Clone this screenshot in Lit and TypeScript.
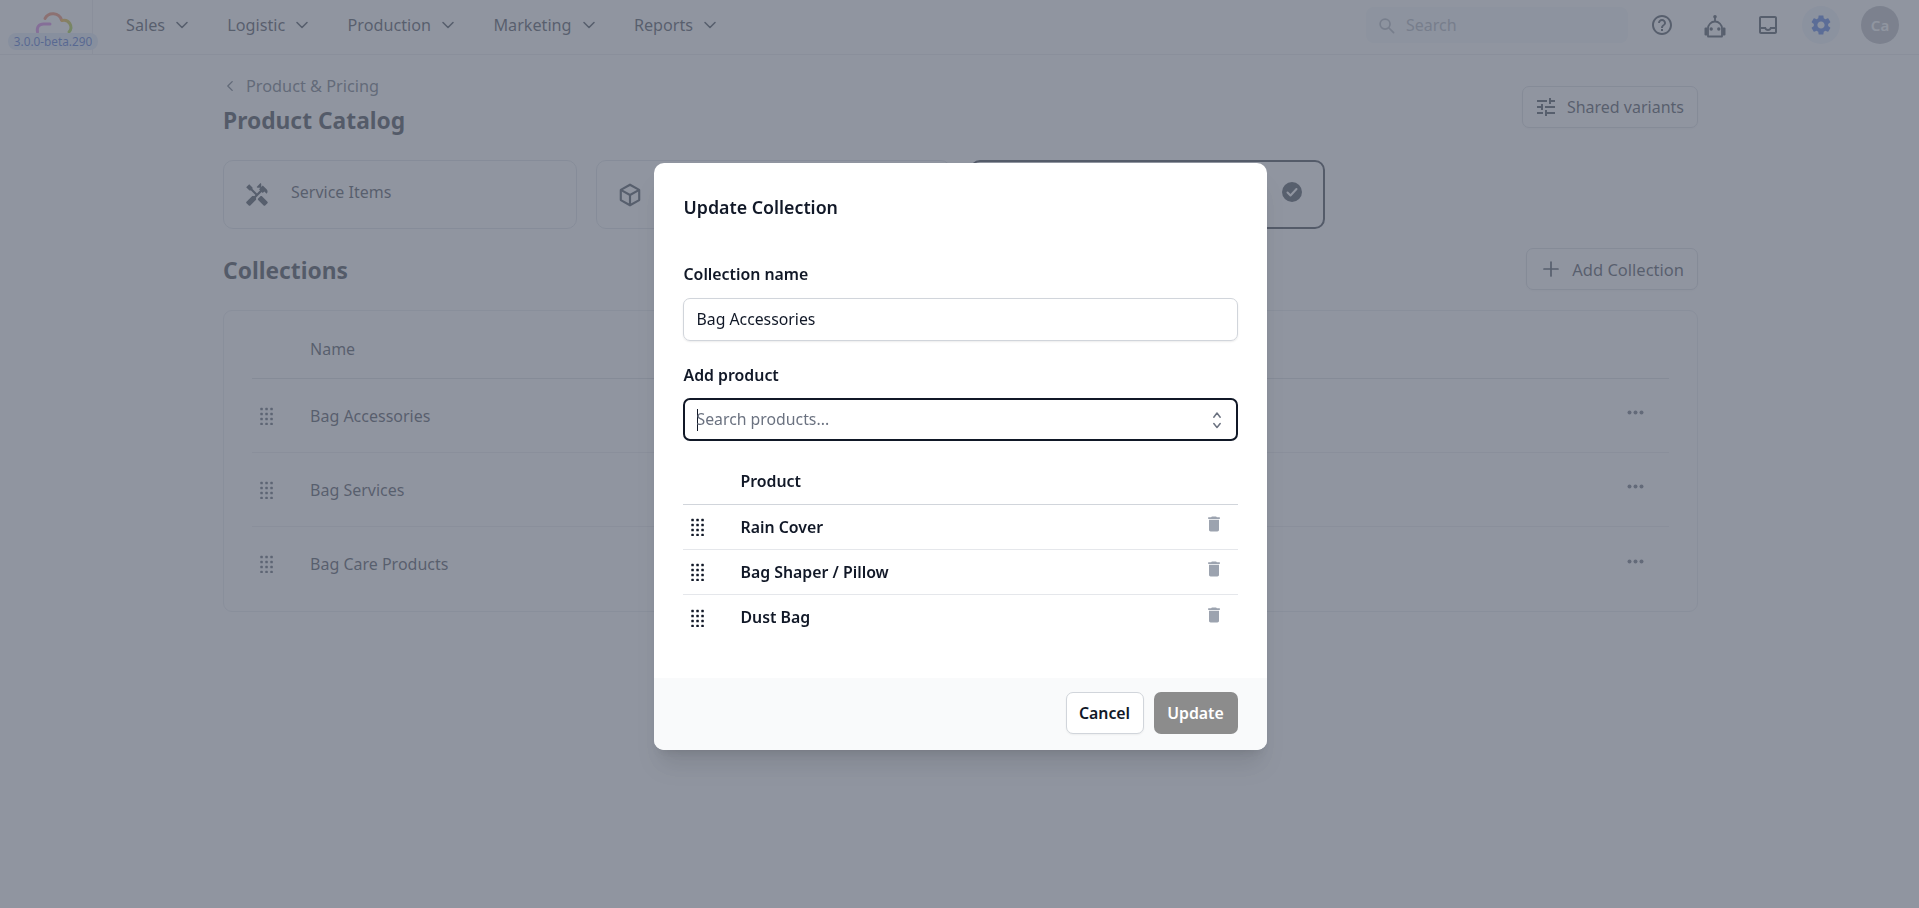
import { LitElement, html, css, svg } from "lit";
import { customElement } from "lit/decorators.js";

const chevron = html`<svg class="chev" viewBox="0 0 16 16" fill="none" stroke="currentColor" stroke-width="1.6" stroke-linecap="round" stroke-linejoin="round"><path d="M3 5.5l5 5 5-5"/></svg>`;
const dots = (cls: string) => html`<svg class=${cls} viewBox="0 0 13 18" fill="currentColor">${[0, 1, 2].map((c) => [0, 1, 2, 3].map((r) => svg`<rect x=${0.3 + c * 5} y=${0.8 + r * 5} width="2.5" height="2.5" rx="0.6"/>`))}</svg>`;
const ellipsis = html`<svg class="more" viewBox="0 0 17 5" fill="currentColor"><circle cx="2.5" cy="2.5" r="2"/><circle cx="8.5" cy="2.5" r="2"/><circle cx="14.5" cy="2.5" r="2"/></svg>`;
const trash = html`<svg class="trash" viewBox="0 0 24 24" fill="currentColor"><path d="M6 19c0 1.1.9 2 2 2h8c1.1 0 2-.9 2-2V7H6v12zM19 4h-3.5l-1-1h-5l-1 1H5v2h14V4z"/></svg>`;

@customElement("app-root")
export class AppRoot extends LitElement {
  static styles = css`
    :host { display: block; min-height: 908px; background: #fff; font-family: "Noto Sans", "Open Sans", sans-serif; color: #111827; font-size: 16px; }
    * { box-sizing: border-box; }
    svg { display: block; flex: none; }
    header { display: flex; align-items: center; height: 55px; border-bottom: 1px solid #e5e7eb; padding: 0 20px 4px 0; }
    .logo { position: relative; width: 93px; height: 54px; margin-bottom: -4px; border-right: 1px solid #e5e7eb; flex: none; }
    .logo svg { width: 92px; height: 54px; }
    .badge { position: absolute; left: 8px; top: 33px; width: 90px; height: 17px; border-radius: 8px; background: #dbe7f8; color: #1f4fc4; font-size: 11.8px; line-height: 16px; text-align: center; white-space: nowrap; }
    nav { display: flex; gap: 37.3px; margin-left: 33px; }
    .nav-item { display: flex; align-items: center; gap: 9px; color: #1f2937; font-size: 16.2px; }
    .chev { width: 16px; height: 16px; }
    .right { margin-left: auto; display: flex; align-items: center; gap: 15px; }
    .search { display: flex; align-items: center; gap: 11px; width: 262px; height: 36px; padding-left: 12px; background: #f1f5f9; border-radius: 8px; color: #9ca3af; font-size: 16px; }
    .search svg { width: 17px; height: 17px; }
    .icon-btn { width: 38px; height: 38px; border-radius: 50%; display: flex; align-items: center; justify-content: center; color: #1f2937; }
    .icon-btn svg { width: 24px; height: 24px; }
    .icon-btn svg.robot { height: 26px; }
    .icon-btn.active { background: #eaf1fb; color: #2f62d9; }
    .avatar { width: 38px; height: 38px; margin-left: 6px; border-radius: 50%; background: #aeb1b9; color: #fff; display: flex; align-items: center; justify-content: center; font-weight: 600; font-size: 15px; }
    main { margin-left: 223px; width: 1475px; padding-top: 19px; }
    .top { display: flex; justify-content: space-between; align-items: flex-start; }
    .crumb { display: flex; align-items: center; gap: 9px; height: 24px; color: #4b5563; font-size: 16.3px; }
    .crumb svg { width: 14px; height: 14px; }
    h1 { margin: 7px 0 0; font-size: 22.8px; line-height: 32px; font-weight: 700; color: #111827; }
    .btn { display: flex; align-items: center; height: 42px; border: 1px solid #d1d5db; border-radius: 7px; padding: 0 13px 0 11px; gap: 9px; color: #1f2937; font-size: 16px; box-shadow: 0 1px 2px rgba(0,0,0,.05); }
    .btn svg { width: 24px; height: 24px; }
    .btn.add { font-size: 16.5px; padding-left: 12px; }
    .top .btn { margin-top: 12px; }
    .cards { display: grid; grid-template-columns: 354px 354.5px 355.5px; gap: 19px; margin-top: 23px; }
    .card { height: 69px; border: 1px solid #d8dce3; border-radius: 10px; display: flex; align-items: center; padding: 0 20px; color: #1f2937; }
    .card.sel { border: 2px solid #111827; padding: 0 19px; }
    .card svg.ic { width: 26px; height: 26px; margin-right: 21px; }
    .card .label { flex: 1; margin-top: -5px; }
    .card svg.ok { width: 24px; height: 24px; margin: -5px 0 0 auto; }
    .section { display: flex; justify-content: space-between; align-items: center; margin-top: 19px; }
    h2 { margin: 0; padding-top: 2px; font-size: 22.8px; font-weight: 700; color: #111827; }
    .table { margin-top: 20px; border: 1px solid #e2e5ea; border-radius: 9px; padding: 0 28px 10px 28px; }
    .thead { height: 68px; border-bottom: 1px solid #d1d5db; display: flex; align-items: center; padding-left: 58px; padding-top: 8px; color: #1f2937; }
    .row { height: 74px; display: flex; align-items: center; border-bottom: 1px solid #e5e7eb; color: #1f2937; }
    .row:last-child { border-bottom: none; }
    .drag { width: 13px; height: 18px; margin-left: 8px; color: #374151; }
    .name { margin-left: 37px; flex: 1; }
    .more { width: 17px; height: 5px; margin: -6px 25px 0 0; color: #4b5563; }

    .overlay { position: fixed; inset: 0; background: rgba(107,114,128,.75); display: flex; justify-content: center; align-items: flex-start; padding-top: 163px; }
    .modal { width: 613px; height: 587px; background: #fff; border-radius: 10px; box-shadow: 0 20px 25px -5px rgba(0,0,0,.1), 0 8px 10px -6px rgba(0,0,0,.1); overflow: hidden; display: flex; flex-direction: column; margin-left: 1px; }
    .body { padding: 32px 29px 0; flex: 1; }
    .title { font-size: 17.8px; font-weight: 560; line-height: 24px; padding-left: 1px; }
    .lbl { font-size: 15.85px; font-weight: 560; line-height: 24px; padding-left: 1px; }
    .lbl.a { margin-top: 43px; }
    .lbl.b { margin-top: 22px; }
    .input { height: 43px; border: 1px solid #d1d5db; border-radius: 7px; display: flex; align-items: center; padding: 0 13px 1px; font-size: 15.8px; box-shadow: 0 1px 2px rgba(0,0,0,.08); }
    .input.first { margin-top: 12px; }
    .input.focus { margin-top: 11px; border: 2px solid #111827; padding: 0 12px; box-shadow: none; color: #6b7280; }
    .caret { width: 1px; height: 22px; background: #111827; margin-right: -1px; flex: none; }
    .ph { flex: 1; padding-bottom: 1px; }
    .updown { width: 16px; height: 22px; color: #6b7280; margin-right: -1px; }
    .mhead { margin-top: 19px; height: 45px; border-bottom: 1px solid #d1d5db; display: flex; align-items: center; padding: 0 0 3px 58px; font-size: 15.85px; font-weight: 560; }
    .mrow { height: 45px; display: flex; align-items: center; border-bottom: 1px solid #e5e7eb; font-size: 15.85px; font-weight: 560; }
    .mrow:last-child { border-bottom: none; }
    .mdrag { width: 13px; height: 18px; margin-left: 8px; color: #111827; }
    .mname { margin-left: 37px; flex: 1; padding-bottom: 1px; }
    .trash { width: 20px; height: 20px; margin: -6px 14px 0 0; color: #9ca3af; }
    footer { height: 72px; background: #f9fafb; display: flex; justify-content: flex-end; align-items: flex-start; gap: 10px; padding: 14px 29px 0 0; }
    .mbtn { height: 42px; display: flex; align-items: center; justify-content: center; border-radius: 7px; font-size: 15.85px; font-weight: 560; }
    .cancel { width: 78px; background: #fff; border: 1px solid #d1d5db; box-shadow: 0 1px 2px rgba(0,0,0,.05); }
    .update { width: 84px; background: #8c8c8c; color: #fff; }
  `;

  render() {
    const rows = ["Bag Accessories", "Bag Services", "Bag Care Products"];
    const products = ["Rain Cover", "Bag Shaper / Pillow", "Dust Bag"];
    return html`
      <header>
        <div class="logo">
          <svg viewBox="0 0 92 54" fill="none" stroke-width="3" stroke-linecap="round">
            <defs>
              <linearGradient id="gr" x1="0" y1="0" x2="1" y2="1"><stop offset="0" stop-color="#f59e0b"/><stop offset="1" stop-color="#84cc16"/></linearGradient>
            </defs>
            <path d="M45 18.5a9 9 0 0 1 16.5 1.5" stroke="#f0714a"/>
            <path d="M62 20.5a7 7 0 0 1 7 11.5" stroke="url(#gr)"/>
            <path d="M37.5 32c-1-5 1.5-8 6-8H50" stroke="#c026d3" stroke-opacity=".7"/>
          </svg>
          <div class="badge">3.0.0-beta.290</div>
        </div>
        <nav>
          ${["Sales", "Logistic", "Production", "Marketing", "Reports"].map((n) => html`<div class="nav-item">${n}${chevron}</div>`)}
        </nav>
        <div class="right">
          <div class="search">
            <svg viewBox="0 0 24 24" fill="none" stroke="currentColor" stroke-width="2.4" stroke-linecap="round"><circle cx="10" cy="10" r="7"/><path d="M15.5 15.5L22 22"/></svg>
            <span>Search</span>
          </div>
          <div class="icon-btn"><svg viewBox="0 0 24 24" fill="currentColor"><path d="M11 18h2v-2h-2v2zm1-16C6.48 2 2 6.48 2 12s4.48 10 10 10 10-4.48 10-10S17.52 2 12 2zm0 18c-4.41 0-8-3.59-8-8s3.59-8 8-8 8 3.59 8 8-3.59 8-8 8zm0-14c-2.21 0-4 1.79-4 4h2c0-1.1.9-2 2-2s2 .9 2 2c0 2-3 1.75-3 5h2c0-2.25 3-2.5 3-5 0-2.21-1.79-4-4-4z"/></svg></div>
          <div class="icon-btn"><svg class="robot" viewBox="0 0 24 26" fill="none" stroke="currentColor" stroke-width="1.8"><circle cx="12" cy="4.7" r="1.8" fill="currentColor" stroke="none"/><path d="M12 5v5"/><path d="M5 24.5v-8a7 7 0 0 1 14 0v8z" stroke-linejoin="round"/><path d="M4.5 15.5H2.5a1 1 0 0 0-1 1v6a1 1 0 0 0 1 1h2zM19.5 15.5h2a1 1 0 0 1 1 1v6a1 1 0 0 1-1 1h-2z" fill="currentColor" stroke="none"/><circle cx="8.2" cy="17" r="1.7" fill="currentColor" stroke="none"/><circle cx="15.8" cy="17" r="1.7" fill="currentColor" stroke="none"/></svg></div>
          <div class="icon-btn"><svg viewBox="0 0 24 24" fill="currentColor"><path d="M19 3H5c-1.1 0-2 .9-2 2v14c0 1.1.9 2 2 2h14c1.1 0 2-.9 2-2V5c0-1.1-.9-2-2-2zm0 16H5v-3h3.56c.69 1.19 1.97 2 3.45 2s2.75-.81 3.44-2H19v3zm0-5h-4.99c0 1.1-.9 2-2 2s-2-.9-2-2H5V5h14v9z"/></svg></div>
          <div class="icon-btn active"><svg viewBox="0 0 24 24" fill="currentColor"><path d="M19.14 12.94c.04-.3.06-.61.06-.94 0-.32-.02-.64-.07-.94l2.03-1.58c.18-.14.23-.41.12-.61l-1.92-3.32c-.12-.22-.37-.29-.59-.22l-2.39.96c-.5-.38-1.03-.7-1.62-.94l-.36-2.54c-.04-.24-.24-.41-.48-.41h-3.84c-.24 0-.43.17-.47.41l-.36 2.54c-.59.24-1.13.57-1.62.94l-2.39-.96c-.22-.08-.47 0-.59.22L2.74 8.87c-.12.21-.08.47.12.61l2.03 1.58c-.05.3-.09.63-.09.94s.02.64.07.94l-2.03 1.58c-.18.14-.23.41-.12.61l1.92 3.32c.12.22.37.29.59.22l2.39-.96c.5.38 1.03.7 1.62.94l.36 2.54c.05.24.24.41.48.41h3.84c.24 0 .44-.17.47-.41l.36-2.54c.59-.24 1.13-.56 1.62-.94l2.39.96c.22.08.47 0 .59-.22l1.92-3.32c.12-.22.07-.47-.12-.61l-2.01-1.58zM12 15.6c-1.98 0-3.6-1.62-3.6-3.6s1.62-3.6 3.6-3.6 3.6 1.62 3.6 3.6-1.62 3.6-3.6 3.6z"/></svg></div>
          <div class="avatar">Ca</div>
        </div>
      </header>
      <main>
        <div class="top">
          <div>
            <div class="crumb"><svg viewBox="0 0 16 16" fill="none" stroke="currentColor" stroke-width="1.6" stroke-linecap="round" stroke-linejoin="round"><path d="M10.5 3l-5 5 5 5"/></svg>Product &amp; Pricing</div>
            <h1>Product Catalog</h1>
          </div>
          <div class="btn"><svg viewBox="0 0 24 24" fill="currentColor"><path d="M3 17v2h6v-2H3zM3 5v2h10V5H3zm10 16v-2h8v-2h-8v-2h-2v6h2zM7 9v2H3v2h4v2h2V9H7zm14 4v-2H11v2h10zm-6-4h2V7h4V5h-4V3h-2v6z"/></svg>Shared variants</div>
        </div>
        <div class="cards">
          <div class="card"><svg class="ic" viewBox="0 0 24 24" fill="currentColor"><path d="M21.67 18.17l-5.3-5.3h-.99l-2.54 2.54v.99l5.3 5.3c.39.39 1.02.39 1.41 0l2.12-2.12c.39-.38.39-1.02 0-1.41z"/><path d="M17.34 10.19l1.41-1.41 2.12 2.12c1.17-1.17 1.17-3.07 0-4.24l-3.54-3.54-1.41 1.41V1.71l-.7-.71-3.54 3.54.71.71h2.83l-1.41 1.41 1.06 1.06-2.89 2.89-4.13-4.13V5.06L4.83 2.04 2 4.87 5.03 7.9h1.41l4.13 4.13-.85.85H7.6l-5.3 5.3c-.39.39-.39 1.02 0 1.41l2.12 2.12c.39.39 1.02.39 1.41 0l5.3-5.3v-2.12l5.15-5.15 1.06 1.05z"/></svg><span class="label">Service Items</span></div>
          <div class="card"><svg class="ic" viewBox="0 0 24 24" fill="none" stroke="currentColor" stroke-width="2" stroke-linejoin="round"><path d="M12 2.5l8.5 4.8v9.4L12 21.5l-8.5-4.8V7.3z"/><path d="M12 12l8.5-4.7M12 12v9.5M12 12L3.5 7.3"/></svg></div>
          <div class="card sel"><svg class="ok" viewBox="0 0 24 24"><circle cx="12" cy="12" r="10" fill="#1f2937"/><path d="M7.5 12.5l3 3 6-6.5" fill="none" stroke="#fff" stroke-width="2" stroke-linecap="round" stroke-linejoin="round"/></svg></div>
        </div>
        <div class="section">
          <h2>Collections</h2>
          <div class="btn add"><svg viewBox="0 0 24 24" fill="none" stroke="currentColor" stroke-width="1.7" stroke-linecap="round"><path d="M12 5v14M5 12h14"/></svg>Add Collection</div>
        </div>
        <div class="table">
          <div class="thead">Name</div>
          ${rows.map((r) => html`<div class="row">${dots("drag")}<span class="name">${r}</span>${ellipsis}</div>`)}
        </div>
      </main>
      <div class="overlay">
        <div class="modal">
          <div class="body">
            <div class="title">Update Collection</div>
            <div class="lbl a">Collection name</div>
            <div class="input first">Bag Accessories</div>
            <div class="lbl b">Add product</div>
            <div class="input focus"><span class="caret"></span><span class="ph">Search products...</span>
              <svg class="updown" viewBox="0 0 16 22" fill="none" stroke="currentColor" stroke-width="1.5" stroke-linecap="round" stroke-linejoin="round"><path d="M4.8 8.2L8 4l3.2 4.2M4.8 14.5L8 18.5l3.2-4"/></svg>
            </div>
            <div class="mhead">Product</div>
            ${products.map((p) => html`<div class="mrow">${dots("mdrag")}<span class="mname">${p}</span>${trash}</div>`)}
          </div>
          <footer>
            <div class="mbtn cancel">Cancel</div>
            <div class="mbtn update">Update</div>
          </footer>
        </div>
      </div>
    `;
  }
}
